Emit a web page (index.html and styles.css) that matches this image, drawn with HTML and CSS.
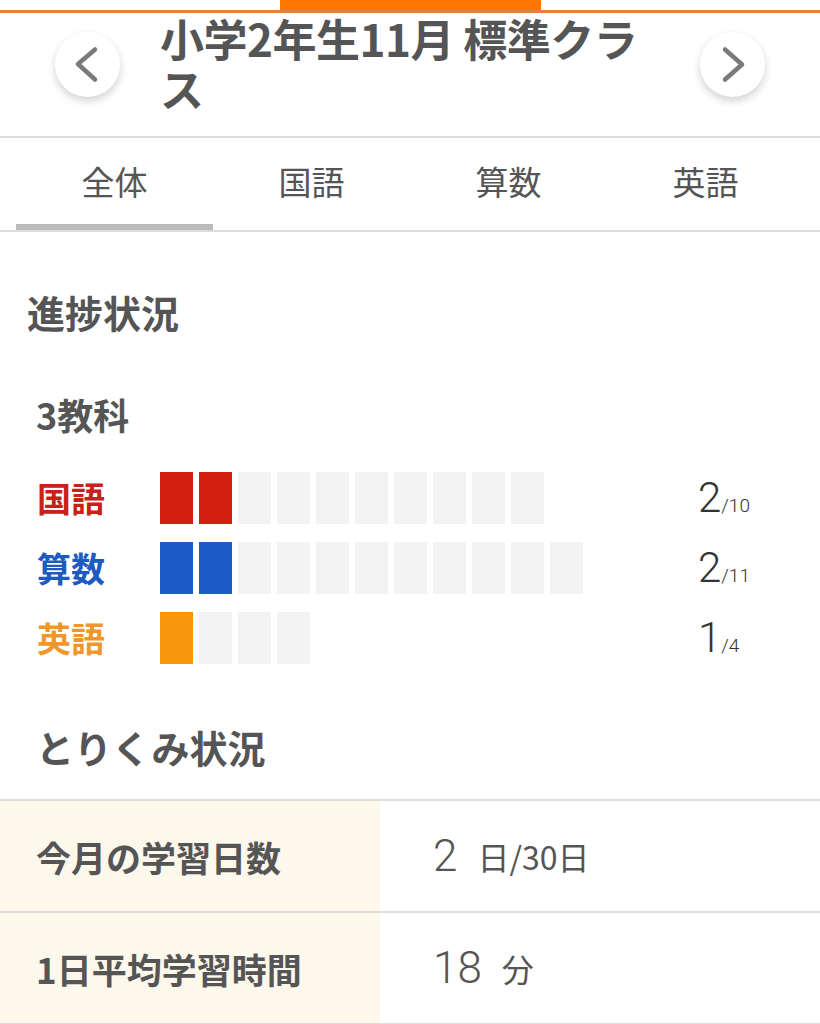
FILE: index.html
```html
<!DOCTYPE html>
<html lang="ja">
<head>
<meta charset="utf-8">
<title>小学2年生11月 標準クラス</title>
<link rel="stylesheet" href="styles.css">
</head>
<body>
<div class="topbar"><div class="topbar-active"></div></div>
<header class="header">
  <button class="nav-btn" aria-label="前へ">
    <svg width="65" height="65" viewBox="0 0 65 65"><path d="M40 17.5 L23 32 L40 47.5" fill="none" stroke="#7a7a7a" stroke-width="4.5" stroke-linecap="round" stroke-linejoin="round"/></svg>
  </button>
  <h1 class="title">小学2年生11月 標準クラス</h1>
  <button class="nav-btn" aria-label="次へ">
    <svg width="65" height="65" viewBox="0 0 65 65"><path d="M25 17.5 L42 32.5 L25 47.5" fill="none" stroke="#7a7a7a" stroke-width="4.5" stroke-linecap="round" stroke-linejoin="round"/></svg>
  </button>
</header>
<nav class="tabs">
  <div class="tab active">全体</div>
  <div class="tab">国語</div>
  <div class="tab">算数</div>
  <div class="tab">英語</div>
</nav>
<main class="content">
  <h2 class="section-title">進捗状況</h2>
  <h3 class="sub-title">3教科</h3>
  <div class="progress">
    <span class="plabel kokugo">国語</span>
    <div class="cells">
      <i class="cell on-red"></i><i class="cell on-red"></i><i class="cell"></i><i class="cell"></i><i class="cell"></i><i class="cell"></i><i class="cell"></i><i class="cell"></i><i class="cell"></i><i class="cell"></i>
    </div>
    <div class="pnum"><span class="big">2</span><span class="small">/10</span></div>

    <span class="plabel sansu">算数</span>
    <div class="cells">
      <i class="cell on-blue"></i><i class="cell on-blue"></i><i class="cell"></i><i class="cell"></i><i class="cell"></i><i class="cell"></i><i class="cell"></i><i class="cell"></i><i class="cell"></i><i class="cell"></i><i class="cell"></i>
    </div>
    <div class="pnum"><span class="big">2</span><span class="small">/11</span></div>

    <span class="plabel eigo">英語</span>
    <div class="cells">
      <i class="cell on-orange"></i><i class="cell"></i><i class="cell"></i><i class="cell"></i>
    </div>
    <div class="pnum"><span class="big">1</span><span class="small">/4</span></div>
  </div>
  <h2 class="section-title torikumi">とりくみ状況</h2>
  <div class="stats">
    <div class="srow">
      <div class="slabel">今月の学習日数</div>
      <div class="svalue"><span class="vbig">2</span><span class="vunit">日/30日</span></div>
    </div>
    <div class="srow">
      <div class="slabel">1日平均学習時間</div>
      <div class="svalue"><span class="vbig">18</span><span class="vunit">分</span></div>
    </div>
  </div>
</main>
</body>
</html>
```

FILE: styles.css
```css
* { box-sizing: border-box; }
html, body { margin: 0; padding: 0; }
body {
  width: 820px;
  background: #fff;
  color: #555;
  font-family: "Noto Sans CJK JP", "Noto Sans", sans-serif;
}

.topbar {
  height: 13px;
  border-bottom: 3px solid #e8803c;
  padding-left: 280px;
}
.topbar-active {
  width: 261px;
  height: 10px;
  background: #ff7600;
}

.header {
  display: flex;
  align-items: center;
  justify-content: space-between;
  padding: 0 55px 23px 55px;
  border-bottom: 2px solid #ddd;
}
.nav-btn {
  width: 65px;
  height: 65px;
  flex: 0 0 65px;
  border: none;
  border-radius: 50%;
  background: #fff;
  padding: 0;
  margin-top: 2px;
  box-shadow: 0 4px 8px rgba(0, 0, 0, 0.18);
  display: flex;
  align-items: center;
  justify-content: center;
}
.nav-btn svg { display: block; }
.title {
  width: 500px;
  margin: 0 auto 0 40px;
  font-size: 44px;
  line-height: 50px;
  font-weight: 700;
  color: #555;
  letter-spacing: -0.5px;
}

.tabs {
  display: flex;
  padding: 0 16px;
  border-bottom: 2px solid #ddd;
}
.tab {
  flex: 1;
  text-align: center;
  font-size: 33px;
  line-height: 83px;
  padding-top: 2px;
  padding-bottom: 1px;
  border-bottom: 6px solid transparent;
  color: #555;
}
.tab.active { border-bottom-color: #bbb; }

.section-title {
  margin: 55px 0 0 27px;
  font-size: 38px;
  line-height: 50px;
  font-weight: 700;
  color: #555;
}
.sub-title {
  margin: 52px 0 0 36px;
  font-size: 36px;
  line-height: 50px;
  font-weight: 700;
  color: #555;
}

.progress {
  margin-top: 33px;
  padding-left: 37px;
  display: grid;
  grid-template-columns: 123px 538px auto;
  grid-auto-rows: 52px;
  row-gap: 18px;
  align-items: center;
}
.plabel {
  font-size: 34px;
  line-height: 52px;
  height: 52px;
  font-weight: 700;
}
.kokugo { color: #c72219; }
.sansu { color: #1e5bc0; }
.eigo { color: #f0972c; }
.cells {
  display: flex;
  gap: 6px;
}
.cell {
  display: block;
  width: 33px;
  height: 52px;
  background: #f3f3f3;
}
.cell.on-red { background: #d21f10; }
.cell.on-blue { background: #1b5bc6; }
.cell.on-orange { background: #f7960a; }
.pnum {
  font-family: Roboto, "Liberation Sans", sans-serif;
  font-weight: 300;
  color: #333;
  height: 52px;
  line-height: 52px;
  white-space: nowrap;
}
.pnum .big { font-size: 42px; line-height: 52px; }
.pnum .small { font-size: 19px; line-height: 52px; }

.section-title.torikumi {
  margin: 58px 0 0 36px;
}

.stats {
  margin-top: 27px;
  border-top: 2px solid #ddd;
}
.srow {
  display: grid;
  grid-template-columns: 380px 1fr;
  height: 112px;
  border-bottom: 2px solid #ddd;
}
.slabel {
  background: #fdf8ec;
  padding-left: 36px;
  display: flex;
  align-items: center;
  font-size: 35px;
  font-weight: 700;
  color: #555;
}
.svalue {
  padding-left: 53px;
  display: flex;
  align-items: center;
  color: #555;
}
.vbig {
  font-family: Roboto, "Liberation Sans", sans-serif;
  font-weight: 300;
  font-size: 44px;
}
.vunit {
  margin-left: 20px;
  font-size: 32px;
}
```
